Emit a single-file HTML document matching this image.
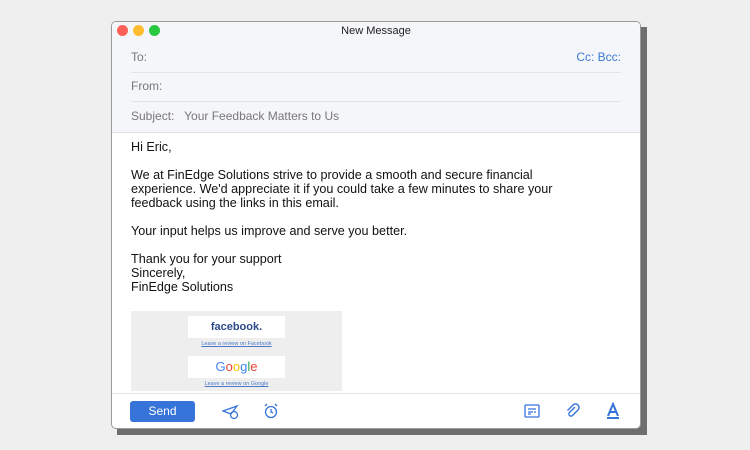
<!DOCTYPE html><html><head><style>
body{margin:0;width:750px;height:450px;background:#efefef;font-family:"Liberation Sans",sans-serif;position:relative;overflow:hidden}
.sh{position:absolute;left:117px;top:27px;width:530px;height:408px;background:#6e6e6e}
.win{position:absolute;left:111px;top:21px;width:528px;height:406px;background:#fff;border:1px solid #9a9a9a;border-radius:5px;overflow:hidden}
.hd{background:#f5f6fa;height:110px;border-bottom:1px solid #e2e3e8}
.dot{position:absolute;top:3px;width:11px;height:11px;border-radius:50%}
.t{position:absolute;top:3px;left:0;right:0;text-align:center;font-size:11px;color:#222}
.row{position:absolute;left:19px;right:19px;font-size:12px;color:#777;border-bottom:1px solid #e2e3e8;height:29px;line-height:29px}
.bd{position:absolute;left:19px;top:118px;font-size:12.6px;color:#111;line-height:14px}
.bd p{margin:0 0 14px}
.box{position:absolute;left:19px;top:289px;width:211px;height:80px;background:#eeeeee}
.card{position:absolute;left:57px;width:97px;height:22px;background:#fff;text-align:center;font-weight:bold}
.lk{position:absolute;left:0;width:211px;text-align:center;font-size:5.5px;color:#4a78c8;text-decoration:underline}
.ft{position:absolute;left:0;right:0;top:371px;border-top:1px solid #e2e3e8;height:35px}
.send{position:absolute;left:18px;top:7px;width:65px;height:21px;background:#3674d9;border-radius:3px;color:#fff;font-size:12px;text-align:center;line-height:21px}
svg{position:absolute}
</style></head><body>
<div class="sh"></div>
<div class="win">
<div class="hd">
<div class="dot" style="left:5px;background:#fe5f57"></div>
<div class="dot" style="left:21px;background:#febc2e"></div>
<div class="dot" style="left:37px;background:#28c840"></div>
<div class="t">New Message</div>
<div class="row" style="top:21px">To:<span style="float:right;color:#3a7bd5">Cc: Bcc:</span></div>
<div class="row" style="top:50px">From:</div>
<div class="row" style="top:80px;border:none">Subject:&nbsp;&nbsp; Your Feedback Matters to Us</div>
</div>
<div class="bd">
<p>Hi Eric,</p>
<p>We at FinEdge Solutions strive to provide a smooth and secure financial<br>experience. We'd appreciate it if you could take a few minutes to share your<br>feedback using the links in this email.</p>
<p>Your input helps us improve and serve you better.</p>
<p>Thank you for your support<br>Sincerely,<br>FinEdge Solutions</p>
</div>
<div class="box">
<div class="card" style="top:5px;color:#2d4a8a;font-size:11px;line-height:22px">facebook.</div>
<div class="lk" style="top:30px">Leave a review on Facebook</div>
<div class="card" style="top:45px;font-size:13px;line-height:22px;font-weight:normal"><span style="color:#4285f4">G</span><span style="color:#ea4335">o</span><span style="color:#fbbc05">o</span><span style="color:#4285f4">g</span><span style="color:#34a853">l</span><span style="color:#ea4335">e</span></div>
<div class="lk" style="top:70px">Leave a review on Google</div>
</div>
<div class="ft">
<div class="send">Send</div>
<svg style="left:110px;top:10px" width="18" height="16" viewBox="0 0 18 16" fill="none" stroke="#3674d9" stroke-width="1.3"><path d="M1 7L15 2 9 10 1 7z"/><circle cx="12" cy="11" r="3.5"/></svg>
<svg style="left:151px;top:9px" width="16" height="16" viewBox="0 0 16 16" fill="none" stroke="#3674d9" stroke-width="1.3"><circle cx="8" cy="9" r="5.5"/><path d="M8 6v3l2 1M2 3l2-2M14 3l-2-2"/></svg>
<svg style="left:412px;top:10px" width="16" height="14" viewBox="0 0 16 14" fill="none" stroke="#3674d9" stroke-width="1.3"><rect x="1" y="1" width="14" height="12" rx="1"/><path d="M4 5h8M4 8h5M10 8h2M4 10h3"/></svg>
<svg style="left:453px;top:9px" width="16" height="16" viewBox="0 0 16 16" fill="none" stroke="#3674d9" stroke-width="1.4"><path d="M10 4L4.5 9.5a2 2 0 0 0 3 3L13 7a3.5 3.5 0 0 0-5-5L2.5 7.5"/></svg>
<svg style="left:494px;top:8px" width="14" height="18" viewBox="0 0 14 18"><path d="M2 14L7 2l5 12M4 10h6" fill="none" stroke="#3674d9" stroke-width="2"/><rect x="1" y="15" width="12" height="2" fill="#3674d9"/></svg>
</div>
</div>
</body></html>
